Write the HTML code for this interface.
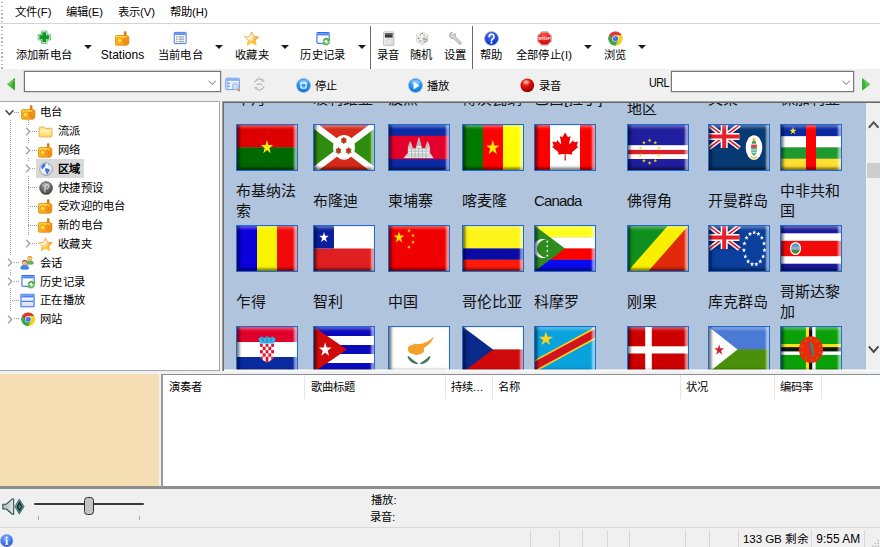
<!DOCTYPE html>
<html lang="zh-CN">
<head>
<meta charset="utf-8">
<title>RarmaRadio</title>
<style>
html,body{margin:0;padding:0}
body{width:880px;height:547px;position:relative;overflow:hidden;background:#f0f0f0;font-family:"Liberation Sans",sans-serif;font-size:11.3px;letter-spacing:.3px;color:#000;line-height:14px}
div,span,svg{position:absolute;white-space:nowrap}
svg{overflow:visible}
#menubar{left:0;top:0;width:880px;height:23px;background:#fff}
#menubar span{top:5px;letter-spacing:0}
#toolbar{left:0;top:23px;width:880px;height:46px;background:#fff;border-top:1px solid #d4d4d4;box-sizing:border-box}
.grip{left:1.300px;width:1.500px;background-image:repeating-linear-gradient(#b2b2b2 0 1.500px,transparent 1.500px 3.760px)}
.tl{top:24px;text-align:center;transform:translateX(-50%)}
.ta{top:20.900px;width:0;height:0;border-left:4px solid transparent;border-right:4px solid transparent;border-top:4.600px solid #1c1c1c;margin-left:-.5px}
.tsep{top:2px;width:1px;height:43px;background:#6a6a6a}
#addr{left:0;top:69px;width:880px;height:32px;background:#f0f0f0}
.combo{background:#fff;border:1px solid #767676;box-sizing:border-box;box-shadow:0 0 0 .5px rgba(120,120,120,.4)}
#tree{left:0;top:101px;width:220px;height:270px;background:#fff;overflow:hidden;box-shadow:inset 0 1px 0 #a8a8a8,inset -1px 0 0 #a8a8a8,inset 0 -1px 0 #a8a8a8}
#tree .t{line-height:14px;left:40px}
#tree .t1{left:58px}
#tree svg.ic{width:16px;height:16px}
#tree .cv{width:6px;height:9px}
.vd{width:1px;background-image:repeating-linear-gradient(#9a9a9a 0 1px,transparent 1px 2px)}
.hd{height:1px;background-image:repeating-linear-gradient(90deg,#9a9a9a 0 1px,transparent 1px 2px)}
#flags{left:222px;top:101px;width:644px;height:268.500px;background:#b0c4de;overflow:hidden}
#flagsb{left:222px;top:101px;width:658px;height:270px;box-shadow:inset 1px 1px 0 #a0a0a0,inset 2px 2px 0 #696969,inset 0 -1.500px 0 #fff;pointer-events:none}
.lab{font-size:15px;letter-spacing:0;line-height:20px;color:#111;height:60px;display:flex;align-items:center}
.fl{width:62px;height:47px;box-sizing:border-box;border:1px solid #1a6ad8;overflow:hidden;background:#888}
.fl svg{left:0;top:0;width:60px;height:45px}
.fl i{position:absolute;display:block;left:0;top:0;width:60px;height:45px;box-shadow:inset 3.500px 0 2.500px -1px rgba(0,0,0,.5),inset -4px 0 2px -1px rgba(255,255,255,.55),inset 0 3.500px 2.500px -1px rgba(255,255,255,.32),inset 0 -3.500px 2.500px -1px rgba(0,0,0,.48)}
#sb{left:866px;top:103px;width:14px;height:267px;background:#f0f0f0}
#art{left:0;top:374px;width:159px;height:112px;background:#f5deb3}
#list{left:160.500px;top:373.700px;width:719.500px;height:115.300px;background:#fff;box-sizing:border-box;border-top:1.500px solid #8a8f96;border-left:2.300px solid #979ba2;border-bottom:3px solid #8e8e8e}
#list span{top:5px}
#list i{position:absolute;top:0;width:1px;height:24px;background:#e5e5e5}
#player{left:0;top:489px;width:880px;height:38px;background:#f0f0f0}
#status{left:0;top:527px;width:880px;height:20px;background:#f0f0f0;border-top:1px solid #d7d7d7;box-sizing:border-box}
#status i{position:absolute;top:2px;width:1px;height:18px;background:#d7d7d7}
</style>
</head>
<body>

<!-- ICON DEFINITIONS -->
<svg width="0" height="0" style="left:-10px;top:-10px">
<defs>
  <linearGradient id="gRadio" x1="0" y1="0" x2="1" y2=".6"><stop offset="0" stop-color="#ffd42a"/><stop offset=".7" stop-color="#ffb21a"/><stop offset="1" stop-color="#f58c08"/></linearGradient>
  <linearGradient id="gFolder" x1="0" y1="0" x2="0" y2="1"><stop offset="0" stop-color="#fff6c2"/><stop offset="1" stop-color="#ffd95c"/></linearGradient>
  <radialGradient id="gGlobe" cx=".4" cy=".3" r=".8"><stop offset="0" stop-color="#ffffff"/><stop offset=".7" stop-color="#e4e6ea"/><stop offset="1" stop-color="#9aa0aa"/></radialGradient>
  <radialGradient id="gPre" cx=".45" cy=".3" r=".8"><stop offset="0" stop-color="#a8a8a8"/><stop offset=".55" stop-color="#626262"/><stop offset="1" stop-color="#383838"/></radialGradient>
  <radialGradient id="gStar" cx=".28" cy=".3" r=".8"><stop offset="0" stop-color="#ffffff"/><stop offset=".3" stop-color="#fff1dc"/><stop offset=".55" stop-color="#ffc477"/><stop offset=".78" stop-color="#ff9a1c"/><stop offset="1" stop-color="#ffb81a"/></radialGradient>
  <linearGradient id="gStarY" x1="0" y1="0" x2="0" y2="1"><stop offset=".6" stop-color="#fff01a" stop-opacity="0"/><stop offset="1" stop-color="#fff01a" stop-opacity=".95"/></linearGradient>
  <linearGradient id="gWinT" x1="0" y1="0" x2="0" y2="1"><stop offset="0" stop-color="#7fb0ff"/><stop offset="1" stop-color="#2f6cf0"/></linearGradient>
  <linearGradient id="gWinB" x1="0" y1="0" x2="0" y2="1"><stop offset="0" stop-color="#ffffff"/><stop offset="1" stop-color="#d8ddf0"/></linearGradient>
  <radialGradient id="gBlueBtn" cx=".5" cy=".35" r=".75"><stop offset="0" stop-color="#6fc4ff"/><stop offset=".55" stop-color="#1a8df0"/><stop offset="1" stop-color="#0a58c8"/></radialGradient>
  <radialGradient id="gRedBall" cx=".4" cy=".3" r=".75"><stop offset="0" stop-color="#ff8a7a"/><stop offset=".35" stop-color="#e8160c"/><stop offset="1" stop-color="#8a0000"/></radialGradient>
  <radialGradient id="gHelp" cx=".45" cy=".3" r=".8"><stop offset="0" stop-color="#4a78ff"/><stop offset=".6" stop-color="#1a3fdc"/><stop offset="1" stop-color="#0a1f9a"/></radialGradient>
  <radialGradient id="gStop" cx=".45" cy=".3" r=".8"><stop offset="0" stop-color="#ff5a50"/><stop offset=".6" stop-color="#e01010"/><stop offset="1" stop-color="#a80000"/></radialGradient>
  <linearGradient id="gGreenL" x1="0" y1="0" x2="1" y2="0"><stop offset="0" stop-color="#7ade62"/><stop offset="1" stop-color="#1f9e1c"/></linearGradient>
  <linearGradient id="gGreenR" x1="0" y1="0" x2="1" y2="0"><stop offset="0" stop-color="#1fa61c"/><stop offset="1" stop-color="#72dc5c"/></linearGradient>
  <radialGradient id="gInfo" cx=".45" cy=".3" r=".8"><stop offset="0" stop-color="#8ab4ff"/><stop offset=".6" stop-color="#3a6ee8"/><stop offset="1" stop-color="#1a3fb0"/></radialGradient>
  <linearGradient id="gGray" x1="0" y1="0" x2="1" y2="1"><stop offset="0" stop-color="#fafafa"/><stop offset="1" stop-color="#d4d4d4"/></linearGradient>

  <symbol id="iRadio" viewBox="0 0 16 16">
    <rect x="9.800" y=".5" width="2.100" height="5.600" rx=".9" fill="#e27a08" stroke="#c86400" stroke-width=".5"/>
    <path d="M1.500 4.900h11.300l1.900 1.100v7.500l-1.900 1.600H1.500a.9 .9 0 0 1-.9-.9V5.800a.9 .9 0 0 1 .9-.9z" fill="url(#gRadio)" stroke="#d87c00" stroke-width=".8"/>
    <path d="M12.300 5.300l2.200.9v7.200l-2.200 1.500z" fill="#f58a10" opacity=".9"/>
    <rect x="1.500" y="5.700" width="10.600" height="1" fill="#ffe45a" opacity=".8"/>
    <circle cx="4.900" cy="10.200" r="2.900" fill="#ffcf4a" stroke="#e8861a" stroke-width=".9"/>
    <circle cx="4.900" cy="10.200" r="1.300" fill="#ffe21a"/>
    <rect x="8.800" y="8" width="2.300" height="4.400" rx=".4" fill="#f7a030" stroke="#dc6c14" stroke-width=".7"/>
  </symbol>
  <symbol id="iFolder" viewBox="0 0 16 16">
    <path d="M1.2 4.6a1.4 1.4 0 0 1 1.4-1.4h3.6a1.3 1.3 0 0 1 1.1.6l.5.8h6a1.1 1.1 0 0 1 1.1 1.1v7a1.1 1.1 0 0 1-1.1 1.1H2.3a1.1 1.1 0 0 1-1.1-1.1z" fill="#ffe58a" stroke="#dca43a" stroke-width=".9"/>
    <rect x="2.2" y="6.2" width="11.8" height="6.6" rx=".5" fill="url(#gFolder)"/>
  </symbol>
  <symbol id="iGlobe" viewBox="0 0 16 16">
    <circle cx="8" cy="8" r="7.2" fill="url(#gGlobe)" stroke="#8e949c" stroke-width=".8"/>
    <path d="M4.2 2.6c1.4-.9 3-1.1 3.6-.7.3.6-.6 1-1.1 1.7-.4.7.6 1 .3 1.7-.4.7-1.4.4-2.1 1.1-.5.6-.2 1.4-.9 1.5-.8 0-1.6-1-1.5-2.300.2-1.200.8-2.300 1.700-3z" fill="#3a74e0"/>
    <path d="M7.300 7.200c.9-.4 2.100-.2 2.900.4.700.6 1.800.6 2.000 1.400.2.900-.8 1.400-1.300 2.200-.5.800-.8 2.000-1.700 2.200-.8.100-.9-1.000-1.100-1.800-.2-.8-1.000-1.200-1.100-2.000-.200-.900-.400-2.000.300-2.400z" fill="#3a74e0"/>
    <path d="M10.200 2.200c.8.200 1.700.800 2.200 1.400-.5.300-1.200.100-1.700-.200-.500-.300-.800-.800-.500-1.200z" fill="#5a8ee8"/>
  </symbol>
  <symbol id="iPre" viewBox="0 0 16 16">
    <circle cx="8" cy="8" r="7.300" fill="url(#gPre)" stroke="#4a4a4a" stroke-width=".6"/>
    <path d="M6.700 12.600V6.200a2.200 2.200 0 1 1 2.200 2.200H8" fill="none" stroke="#e8e8e8" stroke-width="1" stroke-linecap="round"/>
    <ellipse cx="8" cy="4.200" rx="5" ry="2.600" fill="#fff" opacity=".18"/>
  </symbol>
  <symbol id="iStar" viewBox="0 0 16 16">
    <path d="M8 .9l2.100 4.700 5.100.500-3.800 3.400 1.100 5-4.500-2.600-4.500 2.600 1.100-5L.8 6.100l5.100-.500z" fill="url(#gStar)" stroke="#f0a020" stroke-width=".8" stroke-linejoin="round"/>
    <path d="M8 .9l2.100 4.700 5.100.500-3.800 3.400 1.100 5-4.500-2.600-4.500 2.600 1.100-5L.8 6.100l5.100-.500z" fill="url(#gStarY)"/>
  </symbol>
  <symbol id="iUsers" viewBox="0 0 16 16">
    <path d="M6.800 8.800c0-2 1.600-2.900 3.700-2.900s3.700.900 3.700 2.900c0 .700-.600 1.100-1.300 1.100H8.100c-.700 0-1.300-.400-1.300-1.100z" fill="#5cb85c" stroke="#3a8a3a" stroke-width=".5"/>
    <circle cx="10.500" cy="3.800" r="2.500" fill="#f6c48a" stroke="#c98a3a" stroke-width=".400"/>
    <path d="M8 3.500a2.500 2.500 0 0 1 5 0c-.800-.900-1.600-1.200-2.500-1.200s-1.700.300-2.500 1.200z" fill="#e8a020"/>
    <path d="M.8 14c0-2.300 1.900-3.300 4.200-3.300s4.200 1 4.200 3.300c0 .800-.700 1.200-1.500 1.200H2.300c-.800 0-1.500-.400-1.500-1.200z" fill="#3a8af0" stroke="#1a5ac0" stroke-width=".5"/>
    <circle cx="5" cy="8.300" r="2.700" fill="#f2b98a" stroke="#a86a3a" stroke-width=".400"/>
    <path d="M2.300 8a2.700 2.700 0 0 1 5.400 0c-.900-1-1.700-1.300-2.700-1.300s-1.800.300-2.700 1.300z" fill="#8a4a1a"/>
  </symbol>
  <symbol id="iHist" viewBox="0 0 16 16">
    <rect x="1" y="1.500" width="13" height="11.500" rx=".8" fill="#fff" stroke="#2f5fe8" stroke-width="1.100"/>
    <rect x="1.500" y="2" width="12" height="2.600" fill="url(#gWinT)"/>
    <circle cx="11" cy="11.200" r="4.300" fill="#fff"/>
    <path d="M7.400 10.800a3.700 3.700 0 0 1 6.300-2.200l1-1v3.200h-3.200l1.100-1.100a2.200 2.200 0 0 0-3.700 1.100z" fill="#3cb043" stroke="#2a8a30" stroke-width=".300"/>
    <path d="M14.600 11.800a3.700 3.700 0 0 1-6.300 2.200l-1 1v-3.200h3.200l-1.100 1.100a2.200 2.200 0 0 0 3.700-1.100z" fill="#5cc85c" stroke="#2a8a30" stroke-width=".300"/>
  </symbol>
  <symbol id="iNow" viewBox="0 0 16 16">
    <rect x="1" y="1.300" width="14" height="13.400" rx=".8" fill="url(#gWinB)" stroke="#3a74e8" stroke-width="1.200"/>
    <rect x="1.600" y="1.900" width="12.800" height="2.800" fill="url(#gWinT)"/>
    <rect x="1.600" y="8.300" width="12.800" height="1.200" fill="#3a74e8"/>
  </symbol>
  <symbol id="iChrome" viewBox="0 0 16 16">
    <circle cx="8" cy="8" r="7.500" fill="#fff"/>
    <path d="M8 8L1.500 4.250A7.500 7.500 0 0 1 14.500 4.250z" fill="#e0382c"/>
    <path d="M8 8l6.500-3.750A7.500 7.500 0 0 1 8 15.500z" fill="#f9cf1a"/>
    <path d="M8 8v7.500A7.500 7.500 0 0 1 1.500 4.250z" fill="#3aa648"/>
    <path d="M8 4.600h6.300a7.500 7.500 0 0 0-12.800-.350L4.700 9.600z" fill="#e0382c"/>
    <path d="M11 9.700L7.800 15.500A7.500 7.500 0 0 0 14.400 4.400H8z" fill="#f9cf1a"/>
    <path d="M5 9.700L1.600 4.100A7.500 7.500 0 0 0 8 15.500l3-5.600z" fill="#3aa648"/>
    <circle cx="8" cy="8" r="3.500" fill="#f4f4f4"/>
    <circle cx="8" cy="8" r="2.800" fill="#3a6ee0"/>
    <circle cx="7.400" cy="7.200" r="1.300" fill="#6a9af0" opacity=".7"/>
  </symbol>
  <symbol id="iPlus" viewBox="0 0 16 16">
    <path d="M4.900 1.100h6.200v3.800h3.800v6.200h-3.800v3.800H4.900v-3.800H1.100V4.900h3.800z" fill="#dff2e0" stroke="#2f9a44" stroke-width=".9" stroke-dasharray="1.300 .6" stroke-linejoin="round"/>
    <path d="M5.900 2.600h4.200v3.300h3.300v4.200h-3.300v3.300H5.900v-3.300H2.600V5.900h3.300z" fill="#12962a"/>
  </symbol>
  <symbol id="iListWin" viewBox="0 0 16 16">
    <rect x="1.200" y="1.600" width="13.600" height="12.800" rx=".6" fill="#fff" stroke="#3a6ee8" stroke-width="1.100"/>
    <rect x="1.700" y="2.100" width="12.600" height="2.300" fill="url(#gWinT)"/>
    <g fill="#9aa0aa"><rect x="3.200" y="6" width="1.800" height="1.500"/><rect x="6.200" y="6" width="6.400" height="1.500"/><rect x="3.200" y="8.600" width="1.800" height="1.500"/><rect x="6.200" y="8.600" width="6.400" height="1.500"/><rect x="3.200" y="11.200" width="1.800" height="1.500"/><rect x="6.200" y="11.200" width="6.400" height="1.500"/></g>
  </symbol>
  <symbol id="iRec" viewBox="0 0 16 16">
    <rect x="2.600" y=".8" width="10.800" height="14.400" rx="1.300" fill="url(#gGray)" stroke="#b0b0b0" stroke-width=".7"/>
    <rect x="4" y="2.200" width="8" height="4.600" fill="#3a3a3a"/>
    <rect x="4" y="2.200" width="8" height="1.800" fill="#6a6a6a"/>
    <circle cx="8" cy="11" r="2.800" fill="#f8f8f8" stroke="#c4c4c4" stroke-width=".7"/>
    <rect x="6.900" y="9.900" width="2.200" height="2.200" fill="#e2e2e2" stroke="#c8c8c8" stroke-width=".300"/>
  </symbol>
  <symbol id="iDice" viewBox="0 0 16 16">
    <path d="M8 1l6.200 2.800v7.600L8 15 1.800 11.400V3.800z" fill="#eeeeea" stroke="#b8b8b0" stroke-width=".6"/>
    <path d="M8 1l6.200 2.800L8 7 1.800 3.800z" fill="#fafaf6"/>
    <path d="M8 7v8l6.200-3.600V3.800z" fill="#d8d8d0"/>
    <g fill="#555"><circle cx="8" cy="2.700" r=".7"/><circle cx="6" cy="4.200" r=".7"/><circle cx="10" cy="4.200" r=".7"/><circle cx="4.200" cy="8" r=".7"/><circle cx="5.800" cy="11" r=".7"/><circle cx="10" cy="8.800" r=".7"/><circle cx="12.400" cy="9.600" r=".7"/><circle cx="11.200" cy="11.600" r=".7"/></g>
  </symbol>
  <symbol id="iWrench" viewBox="0 0 16 16">
    <path d="M5.200 1.300a3.600 3.600 0 0 0-3.300 5 3.600 3.600 0 0 0 4.400 2l6 6a1.300 1.300 0 0 0 2-1.900L8.200 6.300a3.600 3.600 0 0 0-.800-3.800L5.300 4.600l-1.500-.500-.400-1.500z" fill="#d4d4d4" stroke="#9a9a9a" stroke-width=".8" stroke-linejoin="round"/>
  </symbol>
  <symbol id="iHelp" viewBox="0 0 16 16">
    <circle cx="8" cy="8" r="7.300" fill="url(#gHelp)" stroke="#8a9ac0" stroke-width=".9"/>
    <path d="M5.500 6.200a2.600 2.600 0 1 1 3.700 2.300c-.800.400-1.200.800-1.200 1.700v.300" fill="none" stroke="#fff" stroke-width="1.700" stroke-linecap="round"/>
    <circle cx="8" cy="12.600" r="1.100" fill="#fff"/>
  </symbol>
  <symbol id="iStopSign" viewBox="0 0 16 16">
    <path d="M5 .8h6L15.200 5v6L11 15.200H5L.8 11V5z" fill="url(#gStop)" stroke="#b4b4b4" stroke-width=".9"/>
    <path d="M5.300 1.600h5.400L14.400 5.300v5.400l-3.700 3.700H5.300L1.600 10.700V5.300z" fill="none" stroke="#fff" stroke-width=".5" opacity=".7"/>
    <text x="8" y="9.800" font-family="Liberation Sans, sans-serif" font-size="4.600" font-weight="bold" fill="#fff" text-anchor="middle" letter-spacing="0">STOP</text>
  </symbol>
  <symbol id="iArrowL" viewBox="0 0 8 12" preserveAspectRatio="none">
    <path d="M7.600 .5v11L.5 6z" fill="url(#gGreenL)" stroke="#2f9e2c" stroke-width=".7" stroke-linejoin="round"/>
    <path d="M6.800 2.200L2.200 5.700" stroke="#b4f0a0" stroke-width=".9" opacity=".7"/>
  </symbol>
  <symbol id="iArrowR" viewBox="0 0 8 12" preserveAspectRatio="none">
    <path d="M.4 .5v11L7.500 6z" fill="url(#gGreenR)" stroke="#2aa42a" stroke-width=".7" stroke-linejoin="round"/>
    <path d="M1.500 2.300L5.800 5.700" stroke="#a8eea0" stroke-width=".9" opacity=".7"/>
  </symbol>
  <symbol id="iFind" viewBox="0 0 16 16">
    <rect x=".8" y="1.300" width="14" height="11.700" rx=".8" fill="#f4f7fd" stroke="#6a98e6" stroke-width="1"/>
    <rect x="1.300" y="1.800" width="13" height="2.200" fill="#86b2f2"/>
    <rect x="1.300" y="4" width="2.600" height="8.500" fill="#b8d0f4"/>
    <g fill="#5a8ae4"><rect x="2.600" y="5.900" width="2.200" height="1.300"/><rect x="2.600" y="9" width="2.200" height="1.300"/></g>
    <g fill="#c6cede"><rect x="6" y="5.500" width="7.200" height="1"/></g>
    <rect x="7.600" y="7.200" width="6.200" height="5.600" rx="1.200" fill="#c4dcf8" stroke="#8ab0ec" stroke-width=".8"/>
    <path d="M13.400 12.700l1.300 1.400" stroke="#cc8a44" stroke-width="1.800" stroke-linecap="round"/>
  </symbol>
  <symbol id="iSwirl" viewBox="0 0 16 16">
    <g fill="none" stroke="#adadad" stroke-width="1.400" stroke-dasharray="1.700 .6">
      <path d="M12.300 5.300A4.800 4.800 0 0 0 3.700 6"/>
      <path d="M3.700 10.700a4.800 4.800 0 0 0 8.600-.700"/>
      <path d="M5.500 8.600c1.500-1.500 3.500-1.500 5 0"/>
    </g>
    <path d="M8 .8v2.400M8 12.800v2.400" stroke="#c8c8c8" stroke-width="1.200" stroke-dasharray="1 .8"/>
    <path d="M11.300 2.500l1.600 3.300-3.400-.200z" fill="#c4c4c4"/><path d="M4.700 13.500L3.100 10.200l3.400.200z" fill="#c4c4c4"/>
  </symbol>
  <symbol id="iBtnStop" viewBox="0 0 16 16">
    <circle cx="8" cy="8" r="7.400" fill="url(#gBlueBtn)" stroke="#9ab4d8" stroke-width=".8"/>
    <ellipse cx="8" cy="4.600" rx="5" ry="2.800" fill="#fff" opacity=".25"/>
    <rect x="4.900" y="4.900" width="6.200" height="6.200" rx="1.300" fill="#e8f4ff" stroke="#fff" stroke-width=".5"/>
    <rect x="6" y="6" width="4" height="4" rx=".6" fill="#3a9af0"/>
  </symbol>
  <symbol id="iBtnPlay" viewBox="0 0 16 16">
    <circle cx="8" cy="8" r="7.400" fill="url(#gBlueBtn)" stroke="#9ab4d8" stroke-width=".8"/>
    <ellipse cx="8" cy="4.600" rx="5" ry="2.800" fill="#fff" opacity=".25"/>
    <path d="M6.300 4.400v7.200L11.800 8z" fill="#fff" stroke="#fff" stroke-width=".6" stroke-linejoin="round"/>
  </symbol>
  <symbol id="iBtnRec" viewBox="0 0 16 16">
    <circle cx="8" cy="8" r="7.500" fill="url(#gRedBall)"/>
    <ellipse cx="7" cy="4.400" rx="3.600" ry="2" fill="#fff" opacity=".35"/>
  </symbol>
  <symbol id="iInfo" viewBox="0 0 16 16">
    <circle cx="8" cy="8" r="7.400" fill="url(#gInfo)" stroke="#7a9ae0" stroke-width=".7"/>
    <circle cx="8" cy="4.200" r="1.300" fill="#fff"/>
    <path d="M6.200 6.700h2.900v5h1v1.200H6v-1.200h1.100V7.900h-.900z" fill="#fff"/>
  </symbol>
  <symbol id="iSpk" viewBox="0 0 24 18">
    <linearGradient id="gSpk" x1="0" y1="0" x2="1" y2="0"><stop offset="0" stop-color="#b4b8b8"/><stop offset="1" stop-color="#e4e6e6"/></linearGradient>
    <path d="M.8 6.500h3.700L10.800 1h1.400v16h-1.400L4.500 11.500H.8z" fill="url(#gSpk)" stroke="#1f4c4c" stroke-width="1.100" stroke-linejoin="round"/>
    <path d="M13.600 9L18 1.200 23 9 18 16.800z" fill="#b9c9c8" stroke="#1f4c4a" stroke-width=".9"/>
    <path d="M15 9L18.200 3.200 21.600 9l-3.400 5.800z" fill="#0c3434" stroke="#2a5c5a" stroke-width=".6"/>
    <path d="M17 9l1.300-2.500L19.800 9l-1.500 2.500z" fill="#5a8a86"/>
  </symbol>
  <symbol id="cvR" viewBox="0 0 6 10"><path d="M.8 .8l4.200 4.200-4.200 4.200" fill="none" stroke="#a0a0a0" stroke-width="1.500"/></symbol>
  <symbol id="cvD" viewBox="0 0 11 9"><path d="M.8 1.400L5.500 6.800l4.700-5.400" fill="none" stroke="#4a4a4a" stroke-width="1.900"/></symbol>
  <symbol id="cvU" viewBox="0 0 11 9"><path d="M.8 7.600L5.500 2.200l4.700 5.400" fill="none" stroke="#5a5a5a" stroke-width="2"/></symbol>
  <symbol id="cvDs" viewBox="0 0 10 6"><path d="M.7 .9l4.300 4.200 4.300-4.200" fill="none" stroke="#666" stroke-width="1.150"/></symbol>
</defs>
</svg>

<!-- MENU BAR -->
<div id="menubar">
  <div class="grip" style="top:2px;height:20px"></div>
  <span style="left:15px">文件(F)</span>
  <span style="left:66px">编辑(E)</span>
  <span style="left:118px">表示(V)</span>
  <span style="left:170px">帮助(H)</span>
</div>

<!-- TOOLBAR -->
<div id="toolbar">
  <div class="grip" style="top:1.700px;height:43px"></div>
  <svg style="left:37.200px;top:6px;width:14.500px;height:14.500px"><use href="#iPlus"/></svg>
  <svg style="left:115px;top:7.1px;width:15px;height:15px"><use href="#iRadio"/></svg>
  <svg style="left:173.300px;top:6.9px;width:14.400px;height:14px"><use href="#iListWin"/></svg>
  <svg style="left:244px;top:7.1px;width:15.500px;height:15.500px"><use href="#iStar"/></svg>
  <svg style="left:316px;top:7.1px;width:15px;height:15px"><use href="#iHist"/></svg>
  <svg style="left:381px;top:6.6px;width:15.500px;height:15.500px"><use href="#iRec"/></svg>
  <svg style="left:414.500px;top:7.1px;width:14.500px;height:14.500px"><use href="#iDice"/></svg>
  <svg style="left:447.500px;top:7.1px;width:14.500px;height:14.500px"><use href="#iWrench"/></svg>
  <svg style="left:483.500px;top:6.6px;width:15px;height:15px"><use href="#iHelp"/></svg>
  <svg style="left:537px;top:6.6px;width:15px;height:15px"><use href="#iStopSign"/></svg>
  <svg style="left:607.500px;top:6.6px;width:15px;height:15px"><use href="#iChrome"/></svg>
  <span class="tl" style="left:44px">添加新电台</span><div class="ta" style="left:84.500px"></div>
  <span class="tl" style="left:122.500px;font-size:12px;letter-spacing:0;margin-top:-.5px">Stations</span>
  <span class="tl" style="left:180.5px">当前电台</span><div class="ta" style="left:215px"></div>
  <span class="tl" style="left:252px">收藏夹</span><div class="ta" style="left:281px"></div>
  <span class="tl" style="left:323px">历史记录</span><div class="ta" style="left:358px"></div>
  <div class="tsep" style="left:370px"></div>
  <span class="tl" style="left:388.5px">录音</span>
  <span class="tl" style="left:421.5px">随机</span>
  <span class="tl" style="left:455px">设置</span>
  <div class="tsep" style="left:472px"></div>
  <span class="tl" style="left:491.5px">帮助</span>
  <span class="tl" style="left:544px">全部停止(I)</span><div class="ta" style="left:584px"></div>
  <span class="tl" style="left:615px">浏览</span><div class="ta" style="left:638.500px"></div>
</div>

<!-- ADDRESS BAR -->
<div id="addr">
  <div class="combo" style="left:24px;top:2px;width:197px;height:21px"></div>
  <svg style="left:6.800px;top:9.400px;width:8.200px;height:12.600px"><use href="#iArrowL"/></svg>
  <svg style="left:208.300px;top:10.800px;width:8.400px;height:5.300px"><use href="#cvDs"/></svg>
  <svg style="left:225px;top:7.700px;width:15.500px;height:15.500px"><use href="#iFind"/></svg>
  <svg style="left:251.300px;top:6.800px;width:16.800px;height:16.800px"><use href="#iSwirl"/></svg>
  <svg style="left:296px;top:9px;width:15px;height:15px"><use href="#iBtnStop"/></svg>
  <svg style="left:407.500px;top:9px;width:15px;height:15px"><use href="#iBtnPlay"/></svg>
  <svg style="left:519.700px;top:8.900px;width:14.600px;height:14.600px"><use href="#iBtnRec"/></svg>
  <svg style="left:862.400px;top:8.500px;width:8.300px;height:12.600px"><use href="#iArrowR"/></svg>

  <span style="left:315px;top:10px">停止</span>
  <span style="left:427px;top:10px">播放</span>
  <span style="left:538.500px;top:10px">录音</span>
  <span style="left:648.700px;top:7.200px;font-size:12.200px;letter-spacing:-.5px;transform:scaleX(.88);transform-origin:0 0">URL</span>
  <div class="combo" style="left:671px;top:2px;width:183px;height:21px"></div>
  <svg style="left:841.800px;top:10.800px;width:8.400px;height:5.300px"><use href="#cvDs"/></svg>
</div>

<!-- TREE -->
<div id="tree">
  <!-- dotted connector lines (tree top = page y 101) -->
  <div class="vd" style="left:10px;top:19px;height:191px"></div>
  <div class="vd" style="left:28px;top:19px;height:116px"></div>
  <div class="hd" style="left:14px;top:11px;width:6px"></div>
  <div class="hd" style="left:32px;top:30px;width:5px"></div>
  <div class="hd" style="left:32px;top:49px;width:5px"></div>
  <div class="hd" style="left:32px;top:67px;width:5px"></div>
  <div class="hd" style="left:28px;top:86px;width:10px"></div>
  <div class="hd" style="left:28px;top:105px;width:10px"></div>
  <div class="hd" style="left:28px;top:124px;width:10px"></div>
  <div class="hd" style="left:32px;top:142px;width:5px"></div>
  <div class="hd" style="left:14px;top:161px;width:6px"></div>
  <div class="hd" style="left:14px;top:180px;width:6px"></div>
  <div class="hd" style="left:10px;top:199px;width:10px"></div>
  <div class="hd" style="left:14px;top:217px;width:6px"></div>
  <!-- chevron gaps (white patches over dotted lines) -->
  <div style="left:24px;top:24px;width:8px;height:13px;background:#fff"></div>
  <div style="left:24px;top:43px;width:8px;height:13px;background:#fff"></div>
  <div style="left:24px;top:61px;width:8px;height:13px;background:#fff"></div>
  <div style="left:6px;top:155px;width:8px;height:13px;background:#fff"></div>
  <div style="left:6px;top:174px;width:8px;height:13px;background:#fff"></div>

  <!-- row 1 -->
  <svg class="cv" style="left:4.600px;top:7.800px;width:9px;height:7.400px"><use href="#cvD"/></svg>
  <svg class="ic" style="left:20.5px;top:3.7px;width:15px;height:15px"><use href="#iRadio"/></svg>
  <span class="t" style="top:4px">电台</span>
  <!-- row 2 -->
  <svg class="cv" style="left:24.500px;top:26px"><use href="#cvR"/></svg>
  <svg class="ic" style="left:37.5px;top:22.7px;width:15px;height:15px"><use href="#iFolder"/></svg>
  <span class="t t1" style="top:23px">流派</span>
  <!-- row 3 -->
  <svg class="cv" style="left:24.500px;top:44.500px"><use href="#cvR"/></svg>
  <svg class="ic" style="left:38px;top:41.7px;width:15px;height:15px"><use href="#iRadio"/></svg>
  <span class="t t1" style="top:42px">网络</span>
  <!-- row 4 (selected) -->
  <div style="left:36px;top:58px;width:48px;height:19px;background:#d9d9d9"></div>
  <svg class="cv" style="left:24.500px;top:63px"><use href="#cvR"/></svg>
  <svg class="ic" style="left:38.6px;top:60.7px;width:14.200px;height:14.200px"><use href="#iGlobe"/></svg>
  <span class="t t1" style="top:60.500px;font-weight:bold">区域</span>
  <!-- row 5 -->
  <svg class="ic" style="left:38.6px;top:79.7px;width:14.200px;height:14.200px"><use href="#iPre"/></svg>
  <span class="t t1" style="top:79.500px">快捷预设</span>
  <!-- row 6 -->
  <svg class="ic" style="left:38px;top:97.7px;width:15px;height:15px"><use href="#iRadio"/></svg>
  <span class="t t1" style="top:98px">受欢迎的电台</span>
  <!-- row 7 -->
  <svg class="ic" style="left:38px;top:116.7px;width:15px;height:15px"><use href="#iRadio"/></svg>
  <span class="t t1" style="top:117px">新的电台</span>
  <!-- row 8 -->
  <svg class="cv" style="left:24.500px;top:138px"><use href="#cvR"/></svg>
  <svg class="ic" style="left:38px;top:135.7px;width:15px;height:15px"><use href="#iStar"/></svg>
  <span class="t t1" style="top:136px">收藏夹</span>
  <!-- row 9 -->
  <svg class="cv" style="left:6.500px;top:157px"><use href="#cvR"/></svg>
  <svg class="ic" style="left:20px;top:154.2px;width:15px;height:15px"><use href="#iUsers"/></svg>
  <span class="t" style="top:154.500px">会话</span>
  <!-- row 10 -->
  <svg class="cv" style="left:6.500px;top:176px"><use href="#cvR"/></svg>
  <svg class="ic" style="left:20.5px;top:173.2px;width:15px;height:15px"><use href="#iHist"/></svg>
  <span class="t" style="top:173.500px">历史记录</span>
  <!-- row 11 -->
  <svg class="ic" style="left:20px;top:191.7px;width:15px;height:15px"><use href="#iNow"/></svg>
  <span class="t" style="top:192px">正在播放</span>
  <!-- row 12 -->
  <svg class="cv" style="left:6.500px;top:213.500px"><use href="#cvR"/></svg>
  <svg class="ic" style="left:20.5px;top:210.5px;width:14.400px;height:14.400px"><use href="#iChrome"/></svg>
  <span class="t" style="top:211px">网站</span>
</div>

<!-- FLAGS PANEL -->
<div id="flags">
  <!-- row 0 labels (scrolled mostly out of view) -->
  <div class="lab" style="left:14px;top:-31.9px">不丹</div>
  <div class="lab" style="left:91px;top:-31.9px">玻利维亚</div>
  <div class="lab" style="left:166px;top:-31.9px">波黑</div>
  <div class="lab" style="left:240px;top:-31.9px">博茨瓦纳</div>
  <div class="lab" style="left:312px;top:-31.9px">巴西[拉丁]</div>
  <div class="lab" style="left:405px;top:-31.9px">英属印度洋<br>地区</div>
  <div class="lab" style="left:486px;top:-31.9px">文莱</div>
  <div class="lab" style="left:558px;top:-31.9px">保加利亚</div>
  <!-- row 1 -->
  <div class="fl" style="left:14px;top:23.0px" title="Burkina Faso"><svg viewBox="0 0 60 45" preserveAspectRatio="none"><rect width="60" height="22.5" fill="#de0000"/><rect y="22.5" width="60" height="22.5" fill="#006800"/><path d="M30.00 14.94L31.44 20.03L36.09 20.03L32.33 23.17L33.76 28.25L30.00 25.11L26.24 28.25L27.67 23.17L23.91 20.03L28.56 20.03z" fill="#fcf000"/></svg><i></i></div>
  <div class="fl" style="left:91px;top:23.0px" title="Burundi"><svg viewBox="0 0 60 45" preserveAspectRatio="none"><rect width="60" height="45" fill="#fff"/><path d="M0 0H60L30 22.5z M0 45H60L30 22.5z" fill="#d62a1a"/><path d="M0 0V45L30 22.5z M60 0V45L30 22.5z" fill="#2f8c0e"/><path d="M0 0L60 45M60 0L0 45" stroke="#fff" stroke-width="6.2"/><ellipse cx="30" cy="22.300" rx="10.900" ry="12.400" fill="#fff"/><path d="M29.80 12.03L30.85 13.46L32.48 13.76L31.90 15.50L32.48 17.24L30.85 17.54L29.80 18.97L28.75 17.54L27.12 17.24L27.70 15.50L27.12 13.76L28.75 13.46z" fill="#d6241a" stroke="#3a9a2a" stroke-width=".45"/><path d="M24.50 22.33L25.55 23.76L27.18 24.06L26.60 25.80L27.18 27.54L25.55 27.84L24.50 29.27L23.45 27.84L21.82 27.54L22.40 25.80L21.82 24.06L23.45 23.76z" fill="#d6241a" stroke="#3a9a2a" stroke-width=".45"/><path d="M34.60 22.33L35.65 23.76L37.28 24.06L36.70 25.80L37.28 27.54L35.65 27.84L34.60 29.27L33.55 27.84L31.92 27.54L32.50 25.80L31.92 24.06L33.55 23.76z" fill="#d6241a" stroke="#3a9a2a" stroke-width=".45"/></svg><i></i></div>
  <div class="fl" style="left:166px;top:23.0px" title="Cambodia"><svg viewBox="0 0 60 45" preserveAspectRatio="none"><rect width="60" height="45" fill="#0a2aa6"/><rect y="10.800" width="60" height="23.400" fill="#e4002c"/><path d="M14.800 33h29.600l-3.200-4.600h-.400v-5.400l-.500-2.200-1.700-4.300-1.700 4.300-.500 2.200v.300h-3.600l-.700-2.800-2.200-8-2.200 8-.700 2.800h-3.600v-.300l-.500-2.200-1.700-4.300-1.700 4.300-.500 2.200v5.400h-.400z" fill="#f2f2f2" stroke="#c8c8c8" stroke-width=".4"/><path d="M19.300 22.500l1.700-5 1.700 5zM27.700 21l2.200-7.500 2.200 7.500zM36.700 22.500l1.700-5 1.700 5z" fill="#b4b8b8"/><path d="M16.500 31h26.300M18 29h23.300M19 26.200h21.600M19 23.800h21.600M22.500 23v10M26 23v10M29.700 22v11M33.400 23v10M37 23v10" stroke="#8e9494" stroke-width=".55" fill="none"/></svg><i></i></div>
  <div class="fl" style="left:240px;top:23.0px" title="Cameroon"><svg viewBox="0 0 60 45" preserveAspectRatio="none"><rect width="20" height="45" fill="#007a00"/><rect x="20" width="20" height="45" fill="#ff0000"/><rect x="40" width="20" height="45" fill="#ffff00"/><path d="M29.80 14.96L31.37 20.38L36.46 20.38L32.34 23.73L33.91 29.14L29.80 25.79L25.69 29.14L27.26 23.73L23.14 20.38L28.23 20.38z" fill="#ffea00"/></svg><i></i></div>
  <div class="fl" style="left:312px;top:23.0px" title="Canada"><svg viewBox="0 0 60 45" preserveAspectRatio="none"><rect width="60" height="45" fill="#fff"/><rect width="15" height="45" fill="#ff0000"/><rect x="45" width="15" height="45" fill="#ff0000"/><path d="M30 7.500l-2.300 4.300c-.300.500-.700.400-1.200.200l-1.700-.900 1.300 6.600c.300 1.200-.600 1.200-1 .700l-2.900-3.300-.500 1.700c-.100.200-.300.400-.600.400l-3.700-.800 1 3.500c.200.800.400 1.100-.200 1.300l-1.300.600 6.300 5.100c.300.200.400.600.300.900l-.600 1.800 6.300-.700c.200 0 .500.100.500.400l-.200 6.200h1.400l-.200-6.200c0-.300.300-.400.500-.400l6.300.700-.600-1.800c-.100-.300 0-.700.300-.900l6.300-5.100-1.300-.600c-.600-.200-.400-.500-.200-1.300l1-3.500-3.700.800c-.300 0-.500-.200-.600-.400l-.500-1.700-2.900 3.300c-.400.500-1.300.500-1-.700l1.300-6.600-1.700.900c-.500.200-.900.300-1.200-.200z" fill="#f00000"/></svg><i></i></div>
  <div class="fl" style="left:405px;top:23.0px" title="Cape Verde"><svg viewBox="0 0 60 45" preserveAspectRatio="none"><rect width="60" height="45" fill="#1e1e9e"/><rect y="20.200" width="60" height="13.800" fill="#fff"/><rect y="24.900" width="60" height="4.300" fill="#d8202a"/><path d="M21.60 13.26L22.05 14.81L23.50 14.81L22.33 15.76L22.78 17.31L21.60 16.36L20.42 17.31L20.87 15.76L19.70 14.81L21.15 14.81z" fill="#f4d21a"/><path d="M27.30 15.40L27.75 16.95L29.20 16.95L28.03 17.90L28.48 19.45L27.30 18.49L26.13 19.45L26.57 17.90L25.40 16.95L26.85 16.95z" fill="#f4d21a"/><path d="M30.83 21.00L31.27 22.55L32.73 22.55L31.55 23.50L32.00 25.05L30.83 24.09L29.65 25.05L30.10 23.50L28.92 22.55L30.38 22.55z" fill="#f4d21a"/><path d="M30.83 27.92L31.27 29.47L32.73 29.47L31.55 30.43L32.00 31.97L30.83 31.02L29.65 31.97L30.10 30.43L28.92 29.47L30.38 29.47z" fill="#f4d21a"/><path d="M27.30 33.52L27.75 35.07L29.20 35.07L28.03 36.03L28.48 37.57L27.30 36.62L26.13 37.57L26.57 36.03L25.40 35.07L26.85 35.07z" fill="#f4d21a"/><path d="M21.60 35.66L22.05 37.21L23.50 37.21L22.33 38.16L22.78 39.71L21.60 38.76L20.42 39.71L20.87 38.16L19.70 37.21L21.15 37.21z" fill="#f4d21a"/><path d="M15.90 33.52L16.35 35.07L17.80 35.07L16.63 36.03L17.07 37.57L15.90 36.62L14.72 37.57L15.17 36.03L14.00 35.07L15.45 35.07z" fill="#f4d21a"/><path d="M12.37 27.92L12.82 29.47L14.28 29.47L13.10 30.43L13.55 31.97L12.37 31.02L11.20 31.97L11.65 30.43L10.47 29.47L11.93 29.47z" fill="#f4d21a"/><path d="M12.37 21.00L12.82 22.55L14.28 22.55L13.10 23.50L13.55 25.05L12.37 24.09L11.20 25.05L11.65 23.50L10.47 22.55L11.93 22.55z" fill="#f4d21a"/><path d="M15.90 15.40L16.35 16.95L17.80 16.95L16.63 17.90L17.07 19.45L15.90 18.49L14.72 19.45L15.17 17.90L14.00 16.95L15.45 16.95z" fill="#f4d21a"/></svg><i></i></div>
  <div class="fl" style="left:486px;top:23.0px" title="Cayman Islands"><svg viewBox="0 0 60 45" preserveAspectRatio="none"><rect width="60" height="45" fill="#073a72"/><g><rect width="30.4" height="23" fill="#0a2a7c"/>
<path d="M0 0L30.4 23M30.4 0L0 23" stroke="#fff" stroke-width="4.6"/>
<path d="M0 0L30.4 23M30.4 0L0 23" stroke="#e0202a" stroke-width="1.6"/>
<path d="M15.2 0V23M0 11.5H30.4" stroke="#fff" stroke-width="7"/>
<path d="M15.2 0V23M0 11.5H30.4" stroke="#e8202a" stroke-width="4"/></g><ellipse cx="45" cy="22.500" rx="8.300" ry="12.300" fill="#fff"/><path d="M42.200 20h5.600v6c0 2.600-1.400 4.200-2.800 4.900-1.400-.700-2.800-2.300-2.800-4.900z" fill="#58b48a"/><rect x="42.200" y="19.600" width="5.600" height="3.200" fill="#d8404a"/><path d="M42.400 25h5.200M42.400 27.400h5.200" stroke="#eef" stroke-width=".8"/><path d="M43.400 15.800h3.200l.700 3h-4.600z" fill="#4a9a4a"/><circle cx="45" cy="14.600" r="1.400" fill="#e8b01a"/><path d="M41.600 31.500c2 2.200 4.800 2.200 6.800 0" stroke="#e8c43a" stroke-width="1.400" fill="none"/></svg><i></i></div>
  <div class="fl" style="left:558px;top:23.0px" title="Central African Republic"><svg viewBox="0 0 60 45" preserveAspectRatio="none"><rect width="60" height="11.250" fill="#0a2aa2"/><rect y="11.250" width="60" height="11.250" fill="#fff"/><rect y="22.500" width="60" height="11.250" fill="#1e9a30"/><rect y="33.750" width="60" height="11.250" fill="#ffe030"/><rect x="25" width="10" height="45" fill="#ff0000"/><path d="M12.00 1.86L12.83 4.72L15.52 4.72L13.34 6.49L14.17 9.35L12.00 7.58L9.83 9.35L10.66 6.49L8.48 4.72L11.17 4.72z" fill="#ffe81a"/></svg><i></i></div>
  <div class="lab" style="left:14px;top:69.8px">布基纳法<br>索</div>
  <div class="lab" style="left:91px;top:69.8px">布隆迪</div>
  <div class="lab" style="left:166px;top:69.8px">柬埔寨</div>
  <div class="lab" style="left:240px;top:69.8px">喀麦隆</div>
  <div class="lab" style="left:312px;top:69.8px"><span style="position:static;letter-spacing:-.85px">Canada</span></div>
  <div class="lab" style="left:405px;top:69.8px">佛得角</div>
  <div class="lab" style="left:486px;top:69.8px">开曼群岛</div>
  <div class="lab" style="left:558px;top:69.8px">中非共和<br>国</div>
  <!-- row 2 -->
  <div class="fl" style="left:14px;top:124.3px" title="Chad"><svg viewBox="0 0 60 45" preserveAspectRatio="none"><rect width="20" height="45" fill="#0a00dc"/><rect x="20" width="20" height="45" fill="#f8f400"/><rect x="40" width="20" height="45" fill="#f00a0a"/></svg><i></i></div>
  <div class="fl" style="left:91px;top:124.3px" title="Chile"><svg viewBox="0 0 60 45" preserveAspectRatio="none"><rect width="60" height="45" fill="#fff"/><rect y="22.500" width="60" height="22.500" fill="#de2020"/><rect width="20" height="22.500" fill="#0a1e9e"/><path d="M10.00 5.90L11.12 9.77L14.76 9.77L11.82 12.16L12.94 16.03L10.00 13.64L7.06 16.03L8.18 12.16L5.24 9.77L8.88 9.77z" fill="#fff"/></svg><i></i></div>
  <div class="fl" style="left:166px;top:124.3px" title="China"><svg viewBox="0 0 60 45" preserveAspectRatio="none"><rect width="60" height="45" fill="#f00000"/><path d="M10.00 5.23L11.26 9.56L15.33 9.56L12.03 12.24L13.29 16.57L10.00 13.90L6.71 16.57L7.97 12.24L4.67 9.56L8.74 9.56z" fill="#ffe000"/><path d="M20.95 2.96L20.66 4.47L21.86 5.24L20.49 5.40L20.20 6.92L19.64 5.50L18.26 5.67L19.29 4.63L18.73 3.22L19.92 3.99z" fill="#ffe000"/><path d="M23.35 7.50L24.20 8.72L25.50 8.19L24.73 9.47L25.58 10.69L24.25 10.26L23.48 11.55L23.43 10.00L22.10 9.57L23.40 9.05z" fill="#ffe000"/><path d="M24.00 14.07L24.43 15.54L25.81 15.54L24.69 16.45L25.12 17.92L24.00 17.01L22.88 17.92L23.31 16.45L22.19 15.54L23.57 15.54z" fill="#ffe000"/><path d="M20.95 19.16L20.66 20.67L21.86 21.44L20.49 21.60L20.20 23.12L19.64 21.70L18.26 21.87L19.29 20.83L18.73 19.42L19.92 20.19z" fill="#ffe000"/></svg><i></i></div>
  <div class="fl" style="left:240px;top:124.3px" title="Colombia"><svg viewBox="0 0 60 45" preserveAspectRatio="none"><rect width="60" height="22.500" fill="#fff41a"/><rect y="22.500" width="60" height="11.250" fill="#0a0aa6"/><rect y="33.750" width="60" height="11.250" fill="#ff1a0a"/></svg><i></i></div>
  <div class="fl" style="left:312px;top:124.3px" title="Comoros"><svg viewBox="0 0 60 45" preserveAspectRatio="none"><rect width="60" height="11.250" fill="#ffff1a"/><rect y="11.250" width="60" height="11.250" fill="#fff"/><rect y="22.500" width="60" height="11.250" fill="#ff0000"/><rect y="33.750" width="60" height="11.250" fill="#0a0af0"/><path d="M0 0L30 22.500L0 45z" fill="#2e8c1e"/><path d="M11 13.500a9.500 9.500 0 1 0 0 18a8 8 0 1 1 0-18z" fill="#fff"/><path d="M12.30 13.82L12.64 14.98L13.73 14.98L12.84 15.70L13.18 16.86L12.30 16.14L11.42 16.86L11.76 15.70L10.87 14.98L11.96 14.98z" fill="#fff"/><path d="M12.30 18.52L12.64 19.68L13.73 19.68L12.84 20.40L13.18 21.56L12.30 20.84L11.42 21.56L11.76 20.40L10.87 19.68L11.96 19.68z" fill="#fff"/><path d="M12.30 23.22L12.64 24.38L13.73 24.38L12.84 25.10L13.18 26.26L12.30 25.54L11.42 26.26L11.76 25.10L10.87 24.38L11.96 24.38z" fill="#fff"/><path d="M12.30 27.92L12.64 29.08L13.73 29.08L12.84 29.80L13.18 30.96L12.30 30.24L11.42 30.96L11.76 29.80L10.87 29.08L11.96 29.08z" fill="#fff"/></svg><i></i></div>
  <div class="fl" style="left:405px;top:124.3px" title="Congo"><svg viewBox="0 0 60 45" preserveAspectRatio="none"><rect width="60" height="45" fill="#f8f000"/><path d="M0 0H39.500L0 45z" fill="#0f8f1f"/><path d="M60 0V45H20.500z" fill="#e02a0a"/></svg><i></i></div>
  <div class="fl" style="left:486px;top:124.3px" title="Cook Islands"><svg viewBox="0 0 60 45" preserveAspectRatio="none"><rect width="60" height="45" fill="#0a3f9c"/><g><rect width="30.4" height="23" fill="#0a2a7c"/>
<path d="M0 0L30.4 23M30.4 0L0 23" stroke="#fff" stroke-width="4.6"/>
<path d="M0 0L30.4 23M30.4 0L0 23" stroke="#e0202a" stroke-width="1.6"/>
<path d="M15.2 0V23M0 11.5H30.4" stroke="#fff" stroke-width="7"/>
<path d="M15.2 0V23M0 11.5H30.4" stroke="#e8202a" stroke-width="4"/></g><path d="M45.20 4.04L45.76 5.64L47.29 5.74L46.10 6.83L46.49 8.49L45.20 7.56L43.91 8.49L44.30 6.83L43.11 5.74L44.64 5.64z" fill="#fff"/><path d="M49.39 5.42L49.95 7.02L51.48 7.12L50.29 8.21L50.68 9.88L49.39 8.95L48.10 9.88L48.49 8.21L47.30 7.12L48.83 7.02z" fill="#fff"/><path d="M52.85 9.33L53.41 10.93L54.95 11.03L53.76 12.12L54.15 13.79L52.85 12.86L51.56 13.79L51.95 12.12L50.76 11.03L52.30 10.93z" fill="#fff"/><path d="M55.00 15.09L55.55 16.69L57.09 16.79L55.90 17.88L56.29 19.55L55.00 18.62L53.70 19.55L54.09 17.88L52.90 16.79L54.44 16.69z" fill="#fff"/><path d="M55.44 21.71L56.00 23.31L57.54 23.41L56.35 24.50L56.74 26.17L55.44 25.24L54.15 26.17L54.54 24.50L53.35 23.41L54.89 23.31z" fill="#fff"/><path d="M54.12 28.04L54.68 29.64L56.21 29.74L55.02 30.83L55.41 32.49L54.12 31.56L52.83 32.49L53.22 30.83L52.03 29.74L53.56 29.64z" fill="#fff"/><path d="M51.25 32.98L51.81 34.58L53.35 34.68L52.16 35.77L52.55 37.44L51.25 36.51L49.96 37.44L50.35 35.77L49.16 34.68L50.70 34.58z" fill="#fff"/><path d="M47.34 35.69L47.90 37.29L49.43 37.39L48.24 38.48L48.63 40.14L47.34 39.21L46.05 40.14L46.44 38.48L45.25 37.39L46.78 37.29z" fill="#fff"/><path d="M43.06 35.69L43.62 37.29L45.15 37.39L43.96 38.48L44.35 40.14L43.06 39.21L41.77 40.14L42.16 38.48L40.97 37.39L42.50 37.29z" fill="#fff"/><path d="M39.15 32.98L39.70 34.58L41.24 34.68L40.05 35.77L40.44 37.44L39.15 36.51L37.85 37.44L38.24 35.77L37.05 34.68L38.59 34.58z" fill="#fff"/><path d="M36.28 28.04L36.84 29.64L38.37 29.74L37.18 30.83L37.57 32.49L36.28 31.56L34.99 32.49L35.38 30.83L34.19 29.74L35.72 29.64z" fill="#fff"/><path d="M34.96 21.71L35.51 23.31L37.05 23.41L35.86 24.50L36.25 26.17L34.96 25.24L33.66 26.17L34.05 24.50L32.86 23.41L34.40 23.31z" fill="#fff"/><path d="M35.40 15.09L35.96 16.69L37.50 16.79L36.31 17.88L36.70 19.55L35.40 18.62L34.11 19.55L34.50 17.88L33.31 16.79L34.85 16.69z" fill="#fff"/><path d="M37.55 9.33L38.10 10.93L39.64 11.03L38.45 12.12L38.84 13.79L37.55 12.86L36.25 13.79L36.64 12.12L35.45 11.03L36.99 10.93z" fill="#fff"/><path d="M41.01 5.42L41.57 7.02L43.10 7.12L41.91 8.21L42.30 9.88L41.01 8.95L39.72 9.88L40.11 8.21L38.92 7.12L40.45 7.02z" fill="#fff"/></svg><i></i></div>
  <div class="fl" style="left:558px;top:124.3px" title="Costa Rica"><svg viewBox="0 0 60 45" preserveAspectRatio="none"><rect width="60" height="45" fill="#fff"/><rect width="60" height="7.300" fill="#1a1a9c"/><rect y="37.700" width="60" height="7.300" fill="#1a1a9c"/><rect y="14.800" width="60" height="15.400" fill="#f00a0a"/><ellipse cx="14.500" cy="22.500" rx="5.600" ry="6.600" fill="#fff"/><ellipse cx="14.500" cy="22.500" rx="4.300" ry="5.300" fill="#c8b44a"/><path d="M10.500 21a4.200 5 0 0 1 8 0z" fill="#5a9ad0"/><path d="M10.400 23.500h8.200a4.200 5 0 0 1-8.200 0z" fill="#3a8a4a"/><rect x="10.300" y="21" width="8.400" height="2.500" fill="#8ab0d8"/></svg><i></i></div>
  <div class="lab" style="left:14px;top:170.9px">乍得</div>
  <div class="lab" style="left:91px;top:170.9px">智利</div>
  <div class="lab" style="left:166px;top:170.9px">中国</div>
  <div class="lab" style="left:240px;top:170.9px">哥伦比亚</div>
  <div class="lab" style="left:312px;top:170.9px">科摩罗</div>
  <div class="lab" style="left:405px;top:170.9px">刚果</div>
  <div class="lab" style="left:486px;top:170.9px">库克群岛</div>
  <div class="lab" style="left:558px;top:170.9px">哥斯达黎<br>加</div>
  <!-- row 3 -->
  <div class="fl" style="left:14px;top:225.2px" title="Croatia"><svg viewBox="0 0 60 45" preserveAspectRatio="none"><rect width="60" height="45" fill="#fff"/><rect width="60" height="15" fill="#e0002c"/><rect y="30" width="60" height="15" fill="#0a2aa0"/><clipPath id="hrs"><path d="M23 16.500h14v11.500c0 4-4 6-7 7.500-3-1.500-7-3.500-7-7.500z"/></clipPath><g clip-path="url(#hrs)"><rect x="23" y="16.500" width="14" height="19" fill="#fff"/><rect x="23.0" y="16.5" width="2.800" height="3.300" fill="#e8102a"/><rect x="28.6" y="16.5" width="2.800" height="3.300" fill="#e8102a"/><rect x="34.2" y="16.5" width="2.800" height="3.300" fill="#e8102a"/><rect x="25.8" y="19.8" width="2.800" height="3.300" fill="#e8102a"/><rect x="31.4" y="19.8" width="2.800" height="3.300" fill="#e8102a"/><rect x="23.0" y="23.1" width="2.800" height="3.300" fill="#e8102a"/><rect x="28.6" y="23.1" width="2.800" height="3.300" fill="#e8102a"/><rect x="34.2" y="23.1" width="2.800" height="3.300" fill="#e8102a"/><rect x="25.8" y="26.4" width="2.800" height="3.300" fill="#e8102a"/><rect x="31.4" y="26.4" width="2.800" height="3.300" fill="#e8102a"/><rect x="23.0" y="29.7" width="2.800" height="3.300" fill="#e8102a"/><rect x="28.6" y="29.7" width="2.800" height="3.300" fill="#e8102a"/><rect x="34.2" y="29.7" width="2.800" height="3.300" fill="#e8102a"/><rect x="23" y="33" width="2.800" height="3.300" fill="#e8102a"/><rect x="28.600" y="33" width="2.800" height="3.300" fill="#e8102a"/><rect x="34.200" y="33" width="2.800" height="3.300" fill="#e8102a"/></g><path d="M21.500 11.500l3-2 2.800 1.500 2.700-2 2.700 2 2.800-1.500 3 2-1.200 5h-14.600z" fill="#3ab4e0"/><path d="M24.500 10.500l2.800 5M35.500 10.500l-2.800 5M30 9.500v6" stroke="#1a6ac0" stroke-width=".8"/></svg><i></i></div>
  <div class="fl" style="left:91px;top:225.2px" title="Cuba"><svg viewBox="0 0 60 45" preserveAspectRatio="none"><rect y="0" width="60" height="9" fill="#0a0abc"/><rect y="9" width="60" height="9" fill="#fff"/><rect y="18" width="60" height="9" fill="#0a0abc"/><rect y="27" width="60" height="9" fill="#fff"/><rect y="36" width="60" height="9" fill="#0a0abc"/><path d="M0 0L33 22.500L0 45z" fill="#cf0a0a"/><path d="M11.20 15.30L12.70 20.48L17.57 20.48L13.63 23.69L15.14 28.87L11.20 25.67L7.26 28.87L8.77 23.69L4.83 20.48L9.70 20.48z" fill="#fff"/></svg><i></i></div>
  <div class="fl" style="left:166px;top:225.2px" title="Cyprus"><svg viewBox="0 0 60 45" preserveAspectRatio="none"><rect width="60" height="45" fill="#fff"/><path d="M45 9.500c-2.500 2.500-6 5-10 6.500-2 .800-4.500.800-6.500 1.200-1.500-.500-2.800-.800-4 .300-1.800.500-3.500 1-5.300 2.200-.700 1.500.200 2.800 0 4.300.800 1.800 2.800 2.500 4.500 2.700 1.700.400 2.800 2 4.500 1.300 1.800-1.200 3.800-.800 5.500-2 1.500-1 1.800-2.800 1-4.200.800-1.800 3-2.500 4.500-3.700 2.500-2.300 4.500-5.300 5.800-8.600z" fill="#f5a02a"/><path d="M19 29.500c1.500 4 5 6.500 9.500 7-3.500-1.800-6.500-4-9.500-7zM41 29.500c-1.500 4-5 6.500-9.500 7 3.500-1.800 6.500-4 9.500-7z" fill="#3a7a5a" stroke="#3a7a5a" stroke-width="1.300"/></svg><i></i></div>
  <div class="fl" style="left:240px;top:225.2px" title="Czech Republic"><svg viewBox="0 0 60 45" preserveAspectRatio="none"><rect width="60" height="22.500" fill="#fff"/><rect y="22.500" width="60" height="22.500" fill="#d00a0a"/><path d="M0 0L30 22.500L0 45z" fill="#0a2a8c"/></svg><i></i></div>
  <div class="fl" style="left:312px;top:225.2px" title="DR Congo"><svg viewBox="0 0 60 45" preserveAspectRatio="none"><rect width="60" height="45" fill="#0aa2dc"/><path d="M0 32.800L60 .100V12.400L0 45z" fill="#f8d41a"/><path d="M0 34.600L60 1.900V10.600L0 43.200z" fill="#d2141e"/><path d="M10.90 4.50L12.58 9.68L18.03 9.68L13.62 12.89L15.31 18.07L10.90 14.87L6.49 18.07L8.18 12.89L3.77 9.68L9.22 9.68z" fill="#f8d41a"/></svg><i></i></div>
  <div class="fl" style="left:405px;top:225.2px" title="Denmark"><svg viewBox="0 0 60 45" preserveAspectRatio="none"><rect width="60" height="45" fill="#cc0000"/><rect x="17.200" width="6.600" height="45" fill="#fff"/><rect y="19.300" width="60" height="7.200" fill="#fff"/></svg><i></i></div>
  <div class="fl" style="left:486px;top:225.2px" title="Djibouti"><svg viewBox="0 0 60 45" preserveAspectRatio="none"><rect width="60" height="22.500" fill="#4a7ad4"/><rect y="22.500" width="60" height="22.500" fill="#4a900a"/><path d="M0 0L28.500 22.500L0 45z" fill="#fff"/><path d="M10.20 17.18L11.37 21.20L15.15 21.20L12.09 23.69L13.26 27.71L10.20 25.22L7.14 27.71L8.31 23.69L5.25 21.20L9.03 21.20z" fill="#d8202a"/></svg><i></i></div>
  <div class="fl" style="left:558px;top:225.2px" title="Dominica"><svg viewBox="0 0 60 45" preserveAspectRatio="none"><rect width="60" height="45" fill="#0aa00a"/><rect x="24.900" width="3.100" height="45" fill="#f8e01a"/><rect x="28" width="3.300" height="45" fill="#111"/><rect x="31.300" width="3.300" height="45" fill="#fff"/><rect y="17" width="60" height="3.300" fill="#f8e01a"/><rect y="20.300" width="60" height="4.200" fill="#111"/><rect y="24.500" width="60" height="3.400" fill="#fff"/><ellipse cx="30" cy="22.500" rx="12" ry="13.300" fill="#f0280a"/><path d="M30.00 10.43L30.31 11.52L31.33 11.52L30.51 12.19L30.82 13.27L30.00 12.60L29.18 13.27L29.49 12.19L28.67 11.52L29.69 11.52z" fill="#4aa83a"/><path d="M35.47 12.44L35.78 13.52L36.80 13.52L35.98 14.19L36.29 15.27L35.47 14.60L34.64 15.27L34.96 14.19L34.13 13.52L35.15 13.52z" fill="#4aa83a"/><path d="M38.84 17.69L39.16 18.77L40.18 18.77L39.35 19.44L39.67 20.52L38.84 19.85L38.02 20.52L38.34 19.44L37.51 18.77L38.53 18.77z" fill="#4aa83a"/><path d="M38.84 24.18L39.16 25.26L40.18 25.26L39.35 25.93L39.67 27.01L38.84 26.34L38.02 27.01L38.34 25.93L37.51 25.26L38.53 25.26z" fill="#4aa83a"/><path d="M35.47 29.43L35.78 30.51L36.80 30.51L35.98 31.18L36.29 32.26L35.47 31.59L34.64 32.26L34.96 31.18L34.13 30.51L35.15 30.51z" fill="#4aa83a"/><path d="M30.00 31.43L30.31 32.52L31.33 32.52L30.51 33.19L30.82 34.27L30.00 33.60L29.18 34.27L29.49 33.19L28.67 32.52L29.69 32.52z" fill="#4aa83a"/><path d="M24.53 29.43L24.85 30.51L25.87 30.51L25.04 31.18L25.36 32.26L24.53 31.59L23.71 32.26L24.02 31.18L23.20 30.51L24.22 30.51z" fill="#4aa83a"/><path d="M21.16 24.18L21.47 25.26L22.49 25.26L21.66 25.93L21.98 27.01L21.16 26.34L20.33 27.01L20.65 25.93L19.82 25.26L20.84 25.26z" fill="#4aa83a"/><path d="M21.16 17.69L21.47 18.77L22.49 18.77L21.66 19.44L21.98 20.52L21.16 19.85L20.33 20.52L20.65 19.44L19.82 18.77L20.84 18.77z" fill="#4aa83a"/><path d="M24.53 12.44L24.85 13.52L25.87 13.52L25.04 14.19L25.36 15.27L24.53 14.60L23.71 15.27L24.02 14.19L23.20 13.52L24.22 13.52z" fill="#4aa83a"/><path d="M28.500 15.500c2-1 3.500.500 3.500 3 .500 4 1.500 8 1 11.500l-1.800-1c-1.500-3.500-2.700-7.500-2.700-13.500z" fill="#3a9a3a"/><path d="M28.300 16c1.200 4 1.500 8 3 12" stroke="#7a3ac0" stroke-width="1.500" fill="none"/></svg><i></i></div>
</div>
<div id="flagsb"></div>
<div id="sb">
  <svg style="left:2.200px;top:16.700px;width:11.300px;height:9.200px"><use href="#cvU"/></svg>
  <div style="left:1px;top:59.500px;width:13px;height:15.500px;background:#cdcdcd"></div>
  <svg style="left:2.200px;top:242px;width:11.300px;height:9.200px"><use href="#cvD"/></svg>
</div>

<!-- ALBUM ART + LIST -->
<div id="art"></div>
<div style="left:0;top:486px;width:162px;height:3px;background:#8e8e8e"></div>
<div id="list">
  <span style="left:6px">演奏者</span><i style="left:141px"></i>
  <span style="left:148px">歌曲标题</span><i style="left:282px"></i>
  <span style="left:288px">持续...</span><i style="left:329px"></i>
  <span style="left:335px">名称</span><i style="left:517px"></i>
  <span style="left:523px">状况</span><i style="left:611px"></i>
  <span style="left:617px">编码率</span><i style="left:658px"></i>
</div>

<!-- PLAYER BAR -->
<div id="player">
  <svg style="left:1.500px;top:9.3px;width:23px;height:17.200px"><use href="#iSpk"/></svg>
  <div style="left:33.700px;top:13.8px;width:110.500px;height:2.400px;background:#3a3a3a;border-radius:1px"></div>
  <div style="left:83.700px;top:8px;width:10.400px;height:18px;box-sizing:border-box;border:1.600px solid #2c2c2c;border-radius:3.500px;background:#c4c4c4"></div>
  <div style="left:38px;top:27px;width:1px;height:3.500px;background:#a8a8a8"></div>
  <div style="left:139px;top:27px;width:1px;height:3.500px;background:#a8a8a8"></div>
  <span style="left:371px;top:4px">播放:</span>
  <span style="left:369.5px;top:21px">录音:</span>
</div>

<!-- STATUS BAR -->
<div id="status">
  <svg style="left:0.200px;top:5.500px;width:13.400px;height:13.400px"><use href="#iInfo"/></svg>
  <svg style="left:868px;top:8px;width:12px;height:12px" viewBox="0 0 12 12"><g fill="#bcbcbc"><rect x="9.500" y="9.500" width="1.500" height="1.500"/><rect x="9.500" y="6.700" width="1.500" height="1.500"/><rect x="6.700" y="9.500" width="1.500" height="1.500"/><rect x="9.500" y="3.900" width="1.500" height="1.500"/><rect x="6.700" y="6.700" width="1.500" height="1.500"/><rect x="3.900" y="9.500" width="1.500" height="1.500"/></g></svg>
  <i style="left:530px"></i><i style="left:559px"></i><i style="left:582px"></i><i style="left:607px"></i><i style="left:629px"></i>
  <i style="left:685px"></i><i style="left:709px"></i><i style="left:738px"></i><i style="left:811px"></i><i style="left:864px"></i>
  <span style="left:743px;top:3.500px;font-size:11.600px;letter-spacing:-.1px">133 GB 剩余</span>
  <span style="left:816.300px;top:3.500px;font-size:11.900px;letter-spacing:.05px">9:55 AM</span>
</div>

</body>
</html>
